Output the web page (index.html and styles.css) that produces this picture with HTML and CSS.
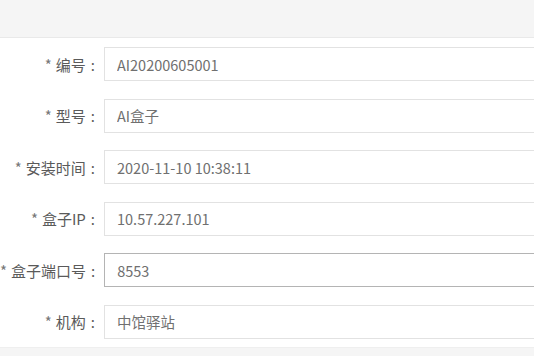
FILE: index.html
```html
<!DOCTYPE html>
<html lang="zh-CN">
<head>
  <meta charset="UTF-8" />
  <meta name="viewport" content="width=device-width, initial-scale=1.0" />
  <title>盒子信息</title>
  <link rel="stylesheet" href="styles.css">
</head>
<body>
  <div class="top-bar"></div>
  <form class="box-form">
    <div class="form-row">
      <label class="form-label required">编号</label>
      <input class="form-input" type="text" value="AI20200605001" readonly>
    </div>
    <div class="form-row">
      <label class="form-label required">型号</label>
      <input class="form-input" type="text" value="AI盒子" readonly>
    </div>
    <div class="form-row">
      <label class="form-label required">安装时间</label>
      <input class="form-input" type="text" value="2020-11-10 10:38:11" readonly>
    </div>
    <div class="form-row">
      <label class="form-label required">盒子IP</label>
      <input class="form-input" type="text" value="10.57.227.101" readonly>
    </div>
    <div class="form-row">
      <label class="form-label required">盒子端口号</label>
      <input class="form-input hover" type="text" value="8553">
    </div>
    <div class="form-row">
      <label class="form-label required">机构</label>
      <input class="form-input" type="text" value="中馆驿站" readonly>
    </div>
  </form>
  <div class="bottom-bar"></div>
</body>
</html>
```

FILE: styles.css
```css
body {
  margin: 0;
  background: #fff;
  font-family: "Noto Sans CJK SC", "Noto Sans", sans-serif;
  font-size: 14px;
  color: #555;
  overflow: hidden;
}
.top-bar {
  height: 37px;
  background: #f5f5f5;
  border-bottom: 1px solid #e9e9e9;
}
.box-form {
  padding-top: 9px;
}
.form-row {
  display: flex;
  align-items: center;
  height: 34px;
  margin-bottom: 17.6px;
}
.form-row:last-child {
  margin-bottom: 8px;
}
.form-label {
  flex: 0 0 104px;
  text-align: right;
  white-space: nowrap;
  font-size: 15px;
  color: #5a5a5a;
}
.form-label.required::before {
  content: "*";
  margin-right: 4px;
  color: #777;
}
.form-label::after {
  content: ":";
  margin: 0 9px 0 5px;
}
.form-input {
  flex: 1;
  min-width: 0;
  height: 34px;
  box-sizing: border-box;
  border: 1px solid #e2e2e2;
  border-right: none;
  padding: 0 12px;
  font: inherit;
  font-size: 14.5px;
  color: #707070;
  background: #fff;
  outline: none;
}
.form-input.hover {
  border-color: #b4b4b4;
}
.bottom-bar {
  height: 20px;
  border-top: 1px solid #efefef;
  background: #f5f5f5;
}
```
